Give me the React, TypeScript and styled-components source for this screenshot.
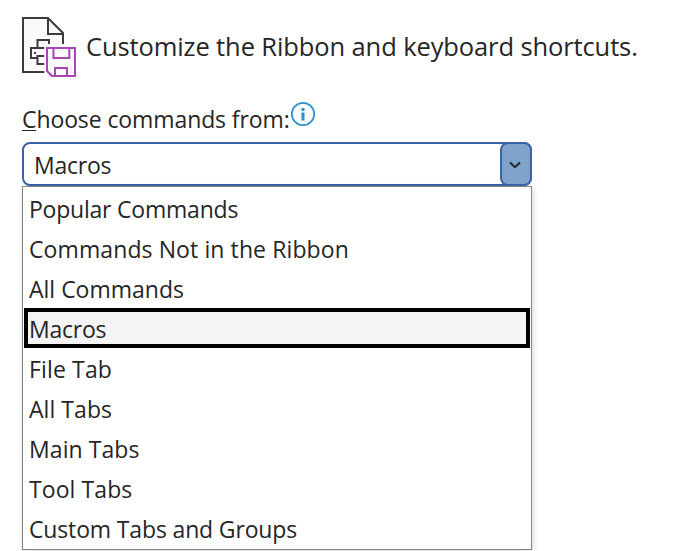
import React from "react";
import styled, { createGlobalStyle } from "styled-components";

const GlobalStyle = createGlobalStyle`
  * { box-sizing: border-box; }
  body { margin: 0; background: #fff; overflow: hidden; }
`;

const Page = styled.main`
  width: 677px;
  height: 551px;
  overflow: hidden;
  padding: 16px 0 0 22px;
  background: #fff;
  color: #262626;
  font-family: "Noto Sans", "Open Sans", sans-serif;
  font-size: 23px;
  font-weight: 400;
  white-space: nowrap;
`;

const Header = styled.header`
  display: flex;
  height: 62px;
`;

const HeaderIcon = styled.svg`
  width: 56px;
  height: 62px;
  flex: none;
`;

const Title = styled.h1<{ $spacing: number }>`
  margin: 0 0 0 8px;
  font-family: "Open Sans", sans-serif;
  font-size: 25.5px;
  font-weight: 400;
  line-height: 60px;
  letter-spacing: ${(p) => p.$spacing}px;
`;

const LabelRow = styled.div`
  display: flex;
  height: 64px;
  padding-top: 23px;
  font-family: "Open Sans", sans-serif;
`;

const Label = styled.label<{ $spacing: number }>`
  width: 268px;
  height: 36px;
  line-height: 36px;
  letter-spacing: ${(p) => p.$spacing}px;
`;

const AccessKey = styled.span`
  display: inline-block;
  height: 30px;
  line-height: 36px;
  border-bottom: 1px solid #262626;
`;

const InfoIcon = styled.svg`
  width: 26px;
  height: 26px;
`;

const Combo = styled.div`
  display: flex;
  width: 510px;
  height: 44px;
  border: 2px solid #3c63a6;
  border-radius: 8px;
  background: #fff;
  font-family: "Open Sans", sans-serif;
`;

const ComboValue = styled.span<{ $spacing: number }>`
  flex: 1;
  padding-left: 10px;
  line-height: 43px;
  letter-spacing: ${(p) => p.$spacing}px;
`;

const ComboButton = styled.button`
  display: flex;
  align-items: center;
  justify-content: center;
  width: 32px;
  height: 44px;
  margin: -2px;
  padding: 1px 2px 0 0;
  border: 2px solid #3c63a6;
  border-radius: 8px;
  background: #80a3c9;
`;

const List = styled.ul`
  width: 510px;
  height: 364px;
  margin: 0;
  padding: 1px 1px 0;
  list-style: none;
  border: 1px solid #85868c;
  box-shadow: 1px 2px 6px rgba(0, 0, 0, 0.17);
  background: #fff;
  font-family: "Open Sans", sans-serif;
`;

const Option = styled.li<{ $spacing: number; $selected: boolean }>`
  height: 40px;
  padding-left: ${(p) => (p.$selected ? 1 : 5)}px;
  border: ${(p) => (p.$selected ? "4px solid #000" : "0")};
  background: ${(p) => (p.$selected ? "#f4f4f4" : "transparent")};
  line-height: ${(p) => (p.$selected ? 34 : 42)}px;
  letter-spacing: ${(p) => p.$spacing}px;
`;

const options = [
  { text: "Popular Commands", spacing: -0.22 },
  { text: "Commands Not in the Ribbon", spacing: 0.1 },
  { text: "All Commands", spacing: 0 },
  { text: "Macros", spacing: -0.25, selected: true },
  { text: "File Tab", spacing: 0.15 },
  { text: "All Tabs", spacing: 0.05 },
  { text: "Main Tabs", spacing: 0.08 },
  { text: "Tool Tabs", spacing: 0.08 },
  { text: "Custom Tabs and Groups", spacing: -0.15 },
];

export default function App() {
  return (
    <>
      <GlobalStyle />
      <Page>
        <Header>
          <HeaderIcon viewBox="0 0 56 62" fill="none" strokeWidth="2">
            <path d="M1 2H26L41 18V56H1Z" fill="#fafafa" />
            <path d="M27 56H1V2H26L41 17V28M26 2V18H41" stroke="#3b3b3b" />
            <path d="M15.5 32V24H27V29M24 32H9V42H15.5M24 40H15.5V48H24" stroke="#3b3b3b" />
            <path d="M12 36h2v2h-2z" fill="#3b3b3b" />
            <path d="M22.3 28H56V62H22.3Z" fill="#fff" />
            <path d="M25 32H53V60H30L25 55Z" fill="#fafafa" stroke="#a945b5" />
            <path d="M31.5 32V42H47.3V32M33 60V52H45V60" stroke="#a945b5" />
          </HeaderIcon>
          <Title $spacing={-0.11}>Customize the Ribbon and keyboard shortcuts.</Title>
        </Header>
        <LabelRow>
          <Label $spacing={-0.1}>
            <AccessKey>C</AccessKey>hoose commands from:
          </Label>
          <InfoIcon viewBox="0 0 26 26">
            <circle cx="13" cy="13" r="11.2" fill="#fafafa" stroke="#2b91cf" strokeWidth="1.7" />
            <path d="M11.5 7h3v3h-3zM11.5 11.5h3v8h-3z" fill="#2b91cf" />
          </InfoIcon>
        </LabelRow>
        <Combo>
          <ComboValue $spacing={-0.25}>Macros</ComboValue>
          <ComboButton aria-label="Open list">
            <svg width="14" height="10" viewBox="0 0 14 10" fill="none">
              <path d="M2 2.5L7 7.2L12 2.5" stroke="#262626" strokeWidth="2" />
            </svg>
          </ComboButton>
        </Combo>
        <List>
          {options.map((o) => (
            <Option key={o.text} $spacing={o.spacing} $selected={!!o.selected}>
              {o.text}
            </Option>
          ))}
        </List>
      </Page>
    </>
  );
}
